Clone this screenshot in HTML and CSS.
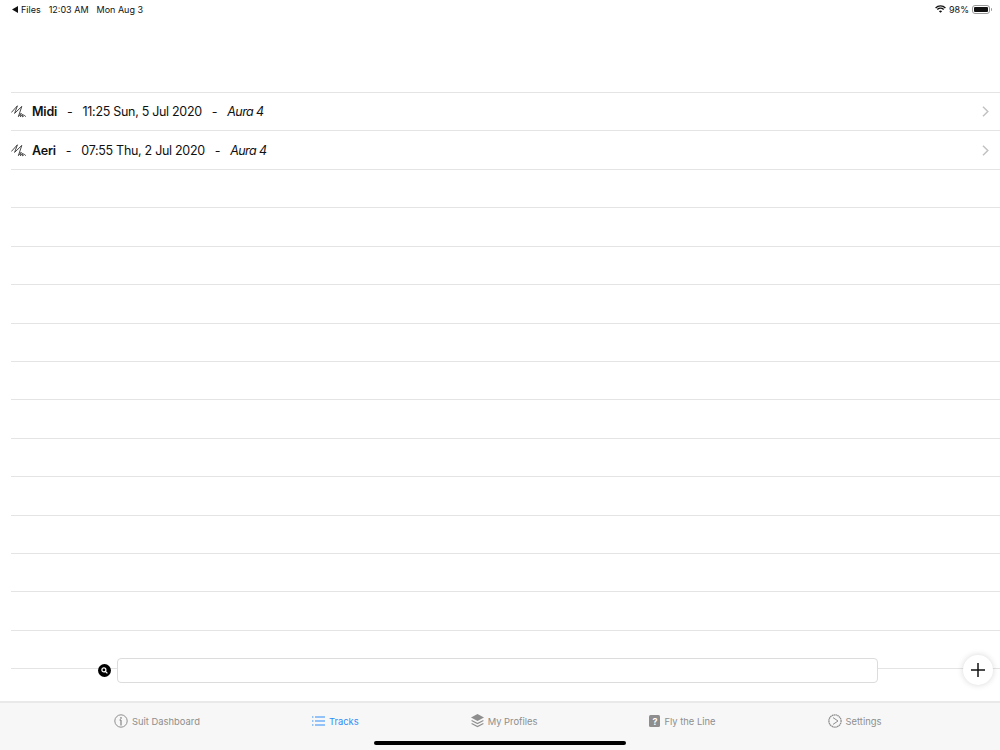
FILE: index.html
```html
<!DOCTYPE html>
<html lang="en">
<head>
<meta charset="UTF-8">
<meta name="viewport" content="width=device-width, initial-scale=1.0">
<title>Tracks</title>
<link rel="stylesheet" href="styles.css">
</head>
<body>

<div class="status">
  <div class="status-left">
    <span class="back"><svg width="6" height="7" viewBox="0 0 6 7"><path d="M0 3.5 6 0v7z" fill="#111"/></svg>Files</span>
    <span>12:03 AM</span>
    <span>Mon Aug 3</span>
  </div>
  <div class="status-right">
    <svg width="11" height="8" viewBox="0 0 11 8" fill="none" stroke="#111" stroke-width="1.4">
      <path d="M.6 2.9a7 7 0 0 1 9.8 0"/>
      <path d="M2.3 4.6a4.6 4.6 0 0 1 6.4 0"/>
      <path d="M5.5 7.8 3.9 6.2a2.3 2.3 0 0 1 3.2 0z" fill="#111" stroke="none"/>
    </svg>
    <span>98%</span>
    <span class="battery"><span class="battery-fill"></span></span>
  </div>
</div>

<main class="main">
  <ul class="tracks">
    <li class="track">
      <svg class="scribble" width="16" height="13" viewBox="0 0 16 13" fill="none" stroke="#333" stroke-width=".9" stroke-linecap="round" stroke-linejoin="round">
        <path d="M.6 7.2 6.4.8 3.6 8.4 10.8 1.4 7.4 11.6l2.8-3.4-.8 3.6 2.6-2.6-.6 2.6 2.2-1.4.8 1"/>
      </svg>
      <b>Midi</b><span>-</span><span>11:25 Sun, 5 Jul 2020</span><span>-</span><i>Aura 4</i>
      <svg class="chevron" width="7" height="11" viewBox="0 0 7 11" fill="none" stroke="#c2c2c5" stroke-width="1.5"><path d="M1 .8 5.8 5.5 1 10.2"/></svg>
    </li>
    <li class="track">
      <svg class="scribble" width="16" height="13" viewBox="0 0 16 13" fill="none" stroke="#333" stroke-width=".9" stroke-linecap="round" stroke-linejoin="round">
        <path d="M.6 7.2 6.4.8 3.6 8.4 10.8 1.4 7.4 11.6l2.8-3.4-.8 3.6 2.6-2.6-.6 2.6 2.2-1.4.8 1"/>
      </svg>
      <b>Aeri</b><span>-</span><span>07:55 Thu, 2 Jul 2020</span><span>-</span><i>Aura 4</i>
      <svg class="chevron" width="7" height="11" viewBox="0 0 7 11" fill="none" stroke="#c2c2c5" stroke-width="1.5"><path d="M1 .8 5.8 5.5 1 10.2"/></svg>
    </li>
    <li class="track"></li>
    <li class="track"></li>
    <li class="track"></li>
    <li class="track"></li>
    <li class="track"></li>
    <li class="track"></li>
    <li class="track"></li>
    <li class="track"></li>
    <li class="track"></li>
    <li class="track"></li>
    <li class="track"></li>
    <li class="track"></li>
    <li class="track"></li>
  </ul>

  <div class="search-row">
    <span class="search-icon">
      <svg width="7" height="7" viewBox="0 0 7 7" fill="none" stroke="#fff" stroke-width="1.2"><circle cx="2.9" cy="2.9" r="2"/><path d="M4.4 4.4 6.4 6.4"/></svg>
    </span>
    <input class="search-input" type="text" aria-label="Search">
    <button class="add" type="button" aria-label="Add">
      <svg width="14" height="14" viewBox="0 0 14 14" stroke="#111" stroke-width="1.5"><path d="M7 0v14M0 7h14"/></svg>
    </button>
  </div>
</main>

<nav class="tabs">
  <a class="tab">
    <svg width="14" height="14" viewBox="0 0 14 14" fill="none" stroke="#8e8e8e" stroke-width="1"><circle cx="7" cy="7" r="6.2"/><path d="M7 6v5.5M5.6 6H7" stroke-width="1.3"/><circle cx="7" cy="3.9" r=".9" fill="#8e8e8e" stroke="none"/></svg>
    Suit Dashboard
  </a>
  <a class="tab active">
    <svg width="13" height="10" viewBox="0 0 13 10" stroke="#2f8dfa" stroke-width="1.2"><path d="M3 1h10M3 5h10M3 9h10M0 1h1.4M0 5h1.4M0 9h1.4"/></svg>
    Tracks
  </a>
  <a class="tab">
    <svg width="13" height="14" viewBox="0 0 13 14" fill="none"><path d="M6.5 0 13 3.5 6.5 7 0 3.5z" fill="#8e8e8e"/><path d="M.6 6.4 6.5 9.6l5.9-3.2M.6 9.4l5.9 3.2 5.9-3.2" stroke="#8e8e8e" stroke-width="1.1"/></svg>
    My Profiles
  </a>
  <a class="tab">
    <span class="help">?</span>
    Fly the Line
  </a>
  <a class="tab">
    <svg width="14" height="14" viewBox="0 0 14 14" fill="none" stroke="#8e8e8e"><circle cx="7" cy="7" r="6.1" stroke-width="1.3" stroke-dasharray="1.5 .4"/><path d="M5 3.6 10 7l-5 3.4" stroke-width="1"/></svg>
    Settings
  </a>
</nav>

<div class="home-bar"></div>

</body>
</html>
```

FILE: styles.css
```css
* {
  box-sizing: border-box;
}

body {
  position: relative;
  display: flex;
  flex-direction: column;
  height: 750px;
  margin: 0;
  overflow: hidden;
  background: #fff;
  color: #111;
  font-family: Inter, "Noto Sans", sans-serif;
}

.status {
  display: flex;
  justify-content: space-between;
  align-items: center;
  height: 18px;
  padding: 0 10px 0 12px;
  font-size: 9px;
}

.status-left {
  display: flex;
  gap: 8px;
}

.back {
  display: flex;
  align-items: center;
  gap: 3px;
}

.status-right {
  display: flex;
  align-items: center;
  gap: 3px;
}

.battery {
  position: relative;
  display: block;
  width: 18px;
  height: 9px;
  padding: 1px;
  border: 1px solid #999;
  border-radius: 3px;
}

.battery::after {
  content: "";
  position: absolute;
  right: -3px;
  top: 2px;
  width: 1.5px;
  height: 3px;
  background: #999;
  border-radius: 0 1px 1px 0;
}

.battery-fill {
  display: block;
  width: 100%;
  height: 100%;
  background: #111;
  border-radius: 1px;
}

.main {
  flex: 1;
  display: flex;
  flex-direction: column;
  padding-top: 74px;
}

.tracks {
  list-style: none;
  margin: 0;
  padding: 0 0 0 11px;
}

.track {
  display: flex;
  align-items: center;
  gap: 10px;
  height: 38.43px;
  padding: 0.5px 11px 0 0;
  border-top: 1px solid #e4e4e4;
  font-size: 12.5px;
  letter-spacing: -0.3px;
}

.track b {
  font-weight: 600;
  font-size: 12.5px;
  letter-spacing: -0.2px;
}

.track i {
  letter-spacing: -0.6px;
}

.scribble {
  margin-right: -5px;
}

.chevron {
  margin-left: auto;
}

.search-row {
  position: relative;
  display: flex;
  align-items: center;
  height: 40px;
  margin-top: -18px;
  padding: 0 7px 0 98px;
}

/* the last ruled line runs behind the search field */
.search-row::before {
  content: "";
  position: absolute;
  left: 11px;
  right: 0;
  top: 18px;
  border-top: 1px solid #e4e4e4;
}

.search-icon {
  position: relative;
  display: flex;
  align-items: center;
  justify-content: center;
  width: 13px;
  height: 13px;
  margin-right: 6px;
  background: #000;
  border-radius: 50%;
}

.search-input {
  position: relative;
  width: 761px;
  height: 25px;
  background: #fff;
  border: 1.5px solid #dcdcdc;
  border-radius: 4px;
}

.add {
  position: relative;
  display: flex;
  align-items: center;
  justify-content: center;
  width: 30px;
  height: 30px;
  margin-left: auto;
  padding: 0;
  background: #fff;
  border: 0;
  border-radius: 50%;
  box-shadow: 0 0 6px rgba(0,0,0,0.16);
}

.tabs {
  display: flex;
  gap: 112px;
  height: 49px;
  padding: 9px 0 0 114px;
  background: #f7f7f7;
  border-top: 2px solid #e9e9e9;
}

.tab {
  display: flex;
  align-items: center;
  align-self: start;
  height: 18px;
  gap: 4px;
  color: #8e8e8e;
  font-size: 9.4px;
}

.tab.active {
  color: #2f8dfa;
}

.help {
  display: flex;
  align-items: center;
  justify-content: center;
  width: 11px;
  height: 12px;
  background: #8e8e8e;
  border-radius: 1.5px;
  color: #fff;
  font-size: 9px;
  font-weight: 700;
}

.home-bar {
  position: absolute;
  left: 374px;
  top: 741px;
  width: 252px;
  height: 4px;
  background: #000;
  border-radius: 2px;
}
```
